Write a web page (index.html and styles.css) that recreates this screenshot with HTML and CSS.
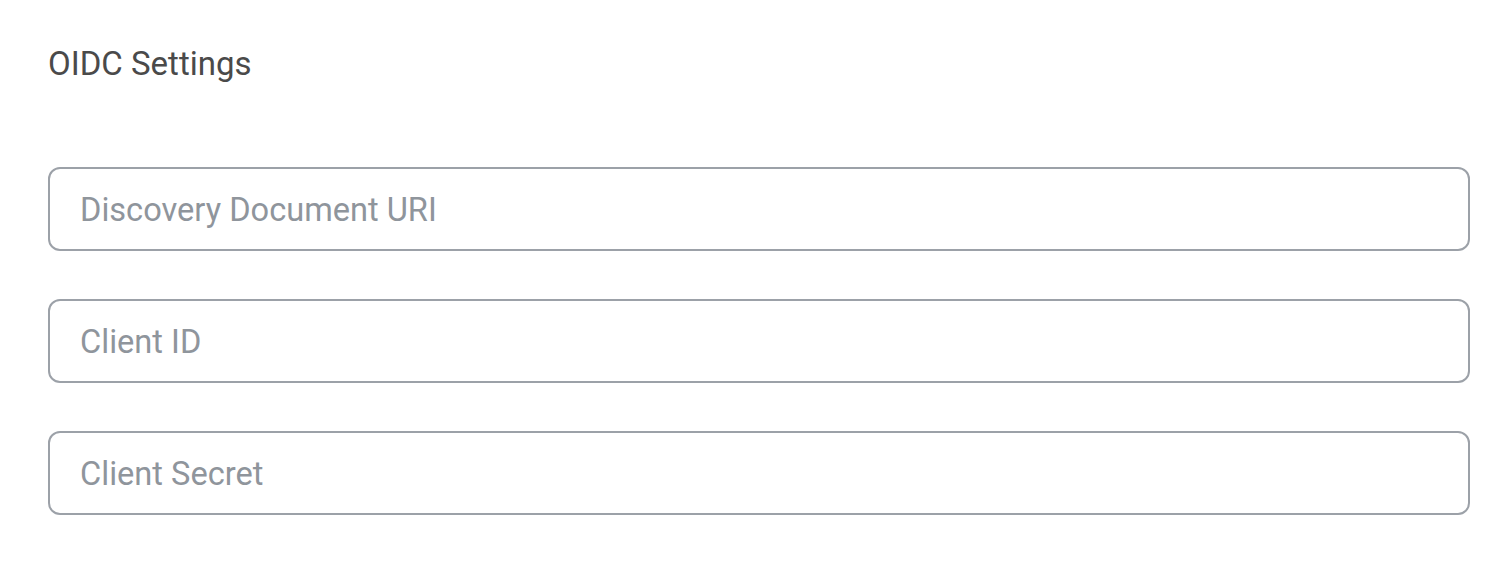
FILE: index.html
```html
<!DOCTYPE html>
<html>
<head>
<meta charset="utf-8">
<link rel="stylesheet" href="styles.css">
</head>
<body>
<div class="page">
  <h2 class="title">OIDC Settings</h2>
  <div class="fields">
    <input class="field" type="text" placeholder="Discovery Document URI">
    <input class="field" type="text" placeholder="Client ID">
    <input class="field" type="password" placeholder="Client Secret">
  </div>
</div>
</body>
</html>
```
FILE: styles.css
```css
html, body {
  margin: 0;
  padding: 0;
  background: #ffffff;
  font-family: Roboto, "Liberation Sans", sans-serif;
}
.page {
  padding: 44px 40px 0 48px;
}
.title {
  margin: 0;
  font-size: 33px;
  font-weight: 400;
  color: #4a4a4a;
  line-height: 40px;
}
.fields {
  margin-top: 83px;
  display: flex;
  flex-direction: column;
  gap: 48px;
}
.field {
  box-sizing: border-box;
  width: 1422px;
  height: 84px;
  border: 2px solid #9ca1a8;
  border-radius: 12px;
  padding: 2px 30px 0;
  font-family: Roboto, "Liberation Sans", sans-serif;
  font-size: 32.6px;
  color: #333;
  outline: none;
  background: #fff;
}
.field::placeholder {
  color: #8f959c;
  opacity: 1;
}
```
